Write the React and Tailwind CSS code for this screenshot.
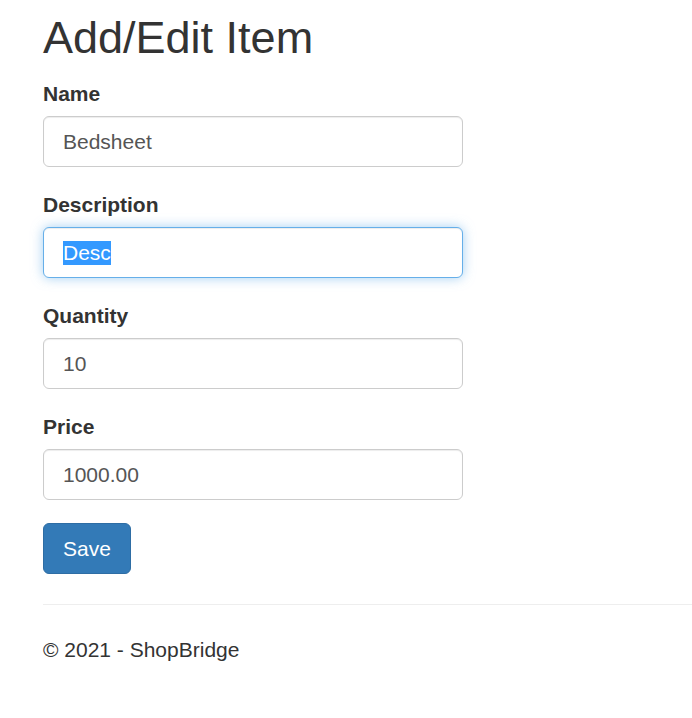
import { useState } from 'react';

const fields = [
  { id: 'name', label: 'Name', value: 'Bedsheet' },
  { id: 'description', label: 'Description', value: 'Desc', focused: true },
  { id: 'quantity', label: 'Quantity', value: '10' },
  { id: 'price', label: 'Price', value: '1000.00' },
];

export default function App() {
  const [values, setValues] = useState(
    Object.fromEntries(fields.map(f => [f.id, f.value]))
  );

  return (
    <div className="min-h-screen w-full bg-white text-[#333] font-['Liberation_Sans',Arial,sans-serif] text-[21px] leading-[30px]">
      <div className="pl-[43px] pt-[13px]">
        <h2 className="text-[45px] leading-[50px] font-normal mb-[16px]">Add/Edit Item</h2>
        <form onSubmit={e => e.preventDefault()} className="w-[420px]">
          {fields.map(f => (
            <div key={f.id} className="mb-[23px]">
              <label htmlFor={f.id} className="block font-bold mb-[7px]">{f.label}</label>
              {f.focused ? (
                <div
                  id={f.id}
                  className="h-[51px] w-full flex items-center px-[19px] border border-[#66afe9] rounded-[6px] bg-white text-[#555] shadow-[inset_0_1px_1px_rgba(0,0,0,0.075),0_0_12px_rgba(102,175,233,0.6)]"
                >
                  <span className="bg-[#3399ff] text-white leading-[24px]">{values[f.id]}</span>
                </div>
              ) : (
                <input
                  id={f.id}
                  value={values[f.id]}
                  onChange={e => setValues({ ...values, [f.id]: e.target.value })}
                  className="block h-[51px] w-full px-[19px] border border-[#ccc] rounded-[6px] bg-white text-[#555] outline-none shadow-[inset_0_1px_1px_rgba(0,0,0,0.075)]"
                />
              )}
            </div>
          ))}
          <button
            type="submit"
            className="h-[51px] px-[19px] bg-[#337ab7] border border-[#2e6da4] rounded-[6px] text-white"
          >
            Save
          </button>
        </form>
        <hr className="mt-[30px] mb-[30px] border-0 border-t border-[#eee]" />
        <footer>
          <p>© 2021 - ShopBridge</p>
        </footer>
      </div>
    </div>
  );
}
